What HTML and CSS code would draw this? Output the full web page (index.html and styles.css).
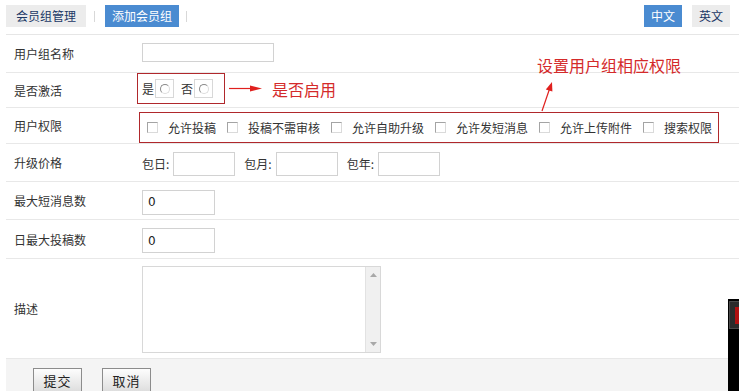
FILE: index.html
```html
<!DOCTYPE html>
<html lang="zh-CN">
<head>
    <meta charset="UTF-8">
    <title>添加会员组</title>
    <link rel="stylesheet" href="styles.css">
</head>
<body>
    <div class="page">
        <div class="topbar">
            <a class="tab">会员组管理</a><span class="sep"></span>
            <a class="tab on">添加会员组</a><span class="sep"></span>
            <div class="lang">
                <a class="lang-btn on">中文</a>
                <a class="lang-btn">英文</a>
            </div>
        </div>

        <div class="form">
            <div class="row r1">
                <div class="label">用户组名称</div>
                <div class="field"><input type="text" class="txt name"></div>
            </div>
            <div class="row r2">
                <div class="label">是否激活</div>
                <div class="field top">
                    <span class="mark-box radios">
                        是<span class="radio"><i></i></span>
                        <span class="no">否</span><span class="radio"><i></i></span>
                    </span>
                    <svg class="arrow-right" width="34" height="10" viewBox="0 0 34 10">
                        <line x1="0" y1="5.5" x2="23" y2="5.5" stroke="#e0201e" stroke-width="1.2"/>
                        <polygon points="21,2.5 33,5.5 21,8.5" fill="#e0201e"/>
                    </svg>
                    <span class="note">是否启用</span>
                </div>
            </div>
            <div class="row r3">
                <div class="label">用户权限</div>
                <div class="field bottom">
                    <span class="mark-box perms">
                        <span class="check"></span><span class="perm">允许投稿</span>
                        <span class="check"></span><span class="perm">投稿不需审核</span>
                        <span class="check"></span><span class="perm">允许自助升级</span>
                        <span class="check"></span><span class="perm">允许发短消息</span>
                        <span class="check"></span><span class="perm">允许上传附件</span>
                        <span class="check"></span><span class="perm">搜索权限</span>
                    </span>
                </div>
            </div>
            <div class="row r4">
                <div class="label">升级价格</div>
                <div class="field">
                    <span class="unit">包日:</span><input type="text" class="txt price">
                    <span class="unit">包月:</span><input type="text" class="txt price">
                    <span class="unit">包年:</span><input type="text" class="txt price">
                </div>
            </div>
            <div class="row r5">
                <div class="label">最大短消息数</div>
                <div class="field"><input type="text" class="txt num" value="0"></div>
            </div>
            <div class="row r6">
                <div class="label">日最大投稿数</div>
                <div class="field"><input type="text" class="txt num" value="0"></div>
            </div>
            <div class="row r7">
                <div class="label">描述</div>
                <div class="field">
                    <div class="desc-wrap">
                        <textarea class="desc"></textarea>
                        <div class="scrollbar">
                            <svg width="7" height="4" viewBox="0 0 7 4"><polygon points="0,4 3.5,0 7,4" fill="#a8a8a8"/></svg>
                            <svg width="7" height="4" viewBox="0 0 7 4"><polygon points="0,0 3.5,4 7,0" fill="#a8a8a8"/></svg>
                        </div>
                    </div>
                </div>
            </div>
        </div>

        <div class="footer">
            <button class="btn">提交</button>
            <button class="btn">取消</button>
        </div>

        <div class="note-perm">
            设置用户组相应权限
            <svg class="arrow-up" width="22" height="36" viewBox="0 0 22 36">
                <line x1="6" y1="33" x2="13.5" y2="11" stroke="#e0201e" stroke-width="1.2"/>
                <polygon points="16,4 16.4,13.6 9.8,11.4" fill="#e0201e"/>
            </svg>
        </div>

        <div class="widget"><div class="widget-btn"><i></i></div></div>
    </div>
</body>
</html>
```

FILE: styles.css
```css
html, body {
    margin: 0;
    overflow: hidden;
}
body {
    font-family: "Noto Sans CJK SC", "Liberation Sans", sans-serif;
    font-size: 12px;
    color: #333;
    background: #fff;
}
.page {
    position: relative;
    width: 739px;
    height: 391px;
    padding-left: 6px;
    box-sizing: border-box;
}
.topbar {
    display: flex;
    align-items: flex-start;
    height: 35px;
    border-bottom: 1px solid #e6e6e6;
    box-sizing: border-box;
}
.tab {
    margin-top: 5px;
    height: 22px;
    line-height: 22px;
    padding: 0 10px;
    background: #ececec;
    color: #1b3866;
}
.tab.on {
    padding: 0 7px;
    background: #4a8bd1;
    color: #fff;
}
.sep {
    width: 1px;
    height: 11px;
    margin: 11px 10px 0 8px;
    background: #d8d8d8;
}
.sep:last-of-type {
    margin-left: 7px;
}
.lang {
    margin-left: auto;
    margin-right: 9px;
    display: flex;
    gap: 10px;
}
.lang-btn {
    margin-top: 5px;
    height: 22px;
    line-height: 22px;
    padding: 0 7px;
    background: #ececec;
    color: #1b3866;
}
.lang-btn.on {
    background: #4a8bd1;
    color: #fff;
}
.row {
    display: flex;
    align-items: center;
    border-bottom: 1px solid #e8e8e8;
    box-sizing: border-box;
}
.r1 { height: 38px; }
.r2 { height: 35px; }
.r3 { height: 36px; }
.r4 { height: 38px; }
.r5 { height: 38px; }
.r6 { height: 39px; }
.r7 { height: 100px; }
.label {
    width: 136px;
    padding-left: 8px;
    box-sizing: border-box;
    flex-shrink: 0;
}
.field {
    display: flex;
    align-items: center;
    height: 100%;
}
.field.top { align-items: flex-start; }
.field.bottom { align-items: flex-end; }
.txt {
    border: 1px solid #d2d2d2;
    padding: 0 5px;
    font-family: "DejaVu Sans", sans-serif;
    font-size: 12px;
    color: #222;
    box-sizing: border-box;
    outline: none;
}
.name {
    width: 132px;
    height: 19px;
    margin-top: -3px;
}
.price {
    width: 62px;
    height: 24px;
    margin: 3px 9px 0 4px;
}
.num {
    width: 73px;
    height: 25px;
    margin-top: 3px;
}
.unit { margin-top: 2px; }
.mark-box {
    display: flex;
    align-items: center;
    height: 31px;
    border: 1px solid #b0282c;
    box-sizing: border-box;
}
.radios {
    margin-left: -5px;
    padding: 0 11px 0 4px;
}
.radio {
    width: 19px;
    height: 19px;
    margin-left: 1px;
    border: 1px solid #d8d8d8;
    box-sizing: border-box;
    display: flex;
    align-items: center;
    justify-content: center;
}
.radio i {
    width: 10px;
    height: 10px;
    border-radius: 50%;
    border: 1px solid;
    border-color: #8a8a8a #dcdcdc #dcdcdc #8a8a8a;
    box-sizing: border-box;
    background: #fff;
}
.no { margin-left: 7px; }
.arrow-right {
    margin: 10px 0 0 4px;
}
.note {
    margin: 6px 0 0 9px;
    font-size: 16px;
    line-height: 20px;
    color: #d42a2a;
}
.perms {
    margin-left: -3px;
    padding: 0 6px 0 7px;
}
.check {
    width: 11px;
    height: 11px;
    border: 1px solid #a4a4a4;
    border-right-color: #dadada;
    border-bottom-color: #dadada;
    box-sizing: border-box;
    background: #fff;
    margin-right: 10px;
}
.perm { margin-right: 11px; }
.perm:last-child { margin-right: 0; }
.desc-wrap {
    display: flex;
    width: 239px;
    height: 87px;
    margin-top: 2px;
    border: 1px solid #d8d8d8;
    box-sizing: border-box;
}
.desc {
    flex: 1;
    border: none;
    padding: 2px;
    resize: none;
    outline: none;
}
.scrollbar {
    width: 15px;
    background: #f0f0f0;
    border-left: 1px solid #e2e2e2;
    display: flex;
    flex-direction: column;
    align-items: center;
    justify-content: space-between;
    padding: 6px 0;
    box-sizing: border-box;
}
.footer {
    height: 40px;
    padding: 9px 0 0 27px;
    background: #f4f4f4;
    box-sizing: border-box;
    display: flex;
    gap: 20px;
}
.btn {
    width: 49px;
    height: 24px;
    padding: 0;
    border: 1px solid #8c8c8c;
    background: linear-gradient(#fdfdfd, #dedede);
    font-family: "Noto Sans CJK SC", sans-serif;
    font-size: 13px;
    letter-spacing: 1px;
    color: #222;
}
.note-perm {
    position: absolute;
    left: 537px;
    top: 57px;
    font-size: 16px;
    line-height: 16px;
    color: #d42a2a;
}
.arrow-up {
    position: absolute;
    left: -1px;
    top: 21px;
}
.widget {
    position: absolute;
    left: 728px;
    top: 299px;
    width: 11px;
    height: 92px;
    background: #000;
    overflow: hidden;
}
.widget-btn {
    width: 30px;
    height: 28px;
    margin: 2px 0 0 1px;
    background: #2b2b2b;
    border: 1px solid #4a4a4a;
    box-sizing: border-box;
    padding: 5px 0 0 5px;
}
.widget-btn i {
    display: block;
    width: 12px;
    height: 17px;
    background: #b01010;
}
```
